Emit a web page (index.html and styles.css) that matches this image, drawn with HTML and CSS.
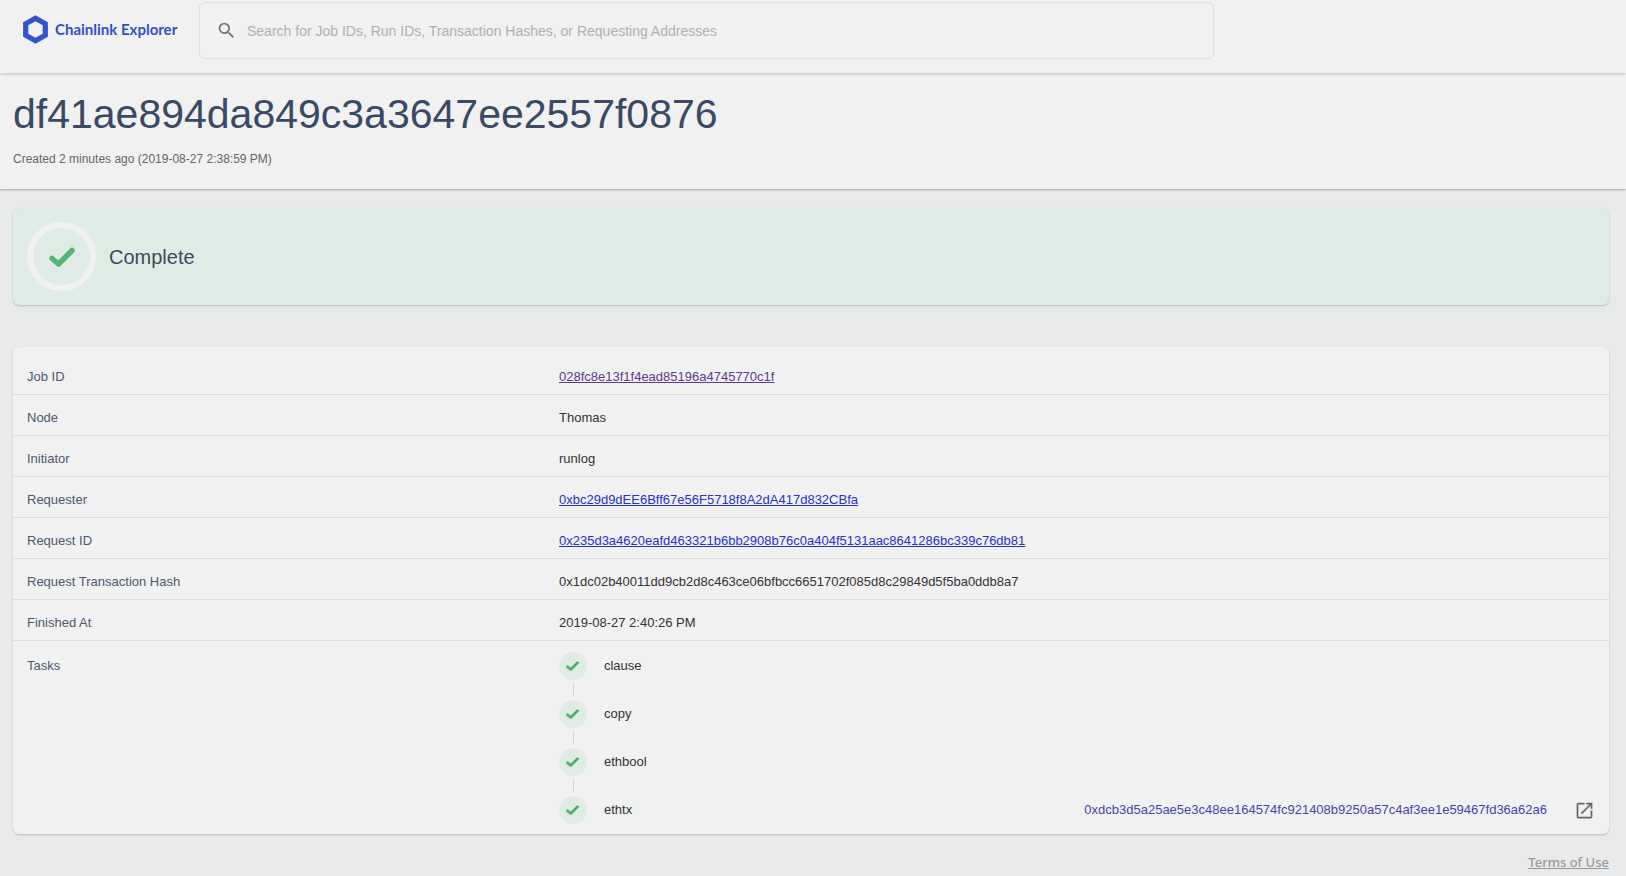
FILE: index.html
```html
<!DOCTYPE html>
<html lang="en">
<head>
<meta charset="utf-8">
<meta name="viewport" content="width=device-width, initial-scale=1">
<title>Chainlink Explorer</title>
<link rel="stylesheet" href="styles.css">
</head>
<body>
<svg class="sprite" aria-hidden="true">
  <symbol id="check" viewBox="0 0 26 20"><path d="M3 11.5 9.5 17 23 3.5" fill="none" stroke="currentColor" stroke-width="5.5" stroke-linecap="round" stroke-linejoin="round"/></symbol>
</svg>
<header class="topbar">
  <a class="brand" href="#">
    <svg class="brand-mark" viewBox="0 0 25 29" aria-hidden="true"><path d="M12.500 3.200 22.300 8.850V20.150L12.500 25.800 2.700 20.150V8.850Z" fill="none" stroke="#2f55cc" stroke-width="5.200"/></svg>
    <span>Chainlink Explorer</span>
  </a>
  <form class="search" role="search">
    <svg class="search-icon" viewBox="0 0 24 24" aria-hidden="true"><path fill="currentColor" d="M15.500 14h-.79l-.28-.27A6.471 6.471 0 0 0 16 9.500 6.500 6.500 0 1 0 9.500 16c1.610 0 3.090-.59 4.230-1.570l.27.28v.79l5 4.990L20.490 19l-4.990-5zm-6 0C7.010 14 5 11.990 5 9.500S7.010 5 9.500 5 14 7.010 14 9.500 11.990 14 9.500 14z"/></svg>
    <input class="search-input" type="search" aria-label="Search" placeholder="Search for Job IDs, Run IDs, Transaction Hashes, or Requesting Addresses">
  </form>
</header>
<section class="hero">
  <h1 class="hero-title">df41ae894da849c3a3647ee2557f0876</h1>
  <p class="hero-meta">Created 2 minutes ago (2019-08-27 2:38:59 PM)</p>
</section>
<main class="content">
  <section class="card status">
    <span class="status-ring"><svg class="status-check" aria-hidden="true"><use href="#check"/></svg></span>
    <h2 class="status-text">Complete</h2>
  </section>
  <section class="card details">
    <table class="table">
      <tbody>
        <tr><th scope="row">Job ID</th><td><a class="visited" href="#">028fc8e13f1f4ead85196a4745770c1f</a></td></tr>
        <tr><th scope="row">Node</th><td>Thomas</td></tr>
        <tr><th scope="row">Initiator</th><td>runlog</td></tr>
        <tr><th scope="row">Requester</th><td><a class="link" href="#">0xbc29d9dEE6Bff67e56F5718f8A2dA417d832CBfa</a></td></tr>
        <tr><th scope="row">Request ID</th><td><a class="link" href="#">0x235d3a4620eafd463321b6bb2908b76c0a404f5131aac8641286bc339c76db81</a></td></tr>
        <tr><th scope="row">Request Transaction Hash</th><td>0x1dc02b40011dd9cb2d8c463ce06bfbcc6651702f085d8c29849d5f5ba0ddb8a7</td></tr>
        <tr><th scope="row">Finished At</th><td>2019-08-27 2:40:26 PM</td></tr>
        <tr class="tasks-row"><th scope="row">Tasks</th><td>
          <ol class="tasks">
            <li class="task"><span class="dot"><svg class="dot-check" aria-hidden="true"><use href="#check"/></svg></span><span>clause</span></li>
            <li class="task"><span class="dot"><svg class="dot-check" aria-hidden="true"><use href="#check"/></svg></span><span>copy</span></li>
            <li class="task"><span class="dot"><svg class="dot-check" aria-hidden="true"><use href="#check"/></svg></span><span>ethbool</span></li>
            <li class="task"><span class="dot"><svg class="dot-check" aria-hidden="true"><use href="#check"/></svg></span><span>ethtx</span>
              <a class="tx" href="#"><span>0xdcb3d5a25ae5e3c48ee164574fc921408b9250a57c4af3ee1e59467fd36a62a6</span>
                <svg class="tx-icon" viewBox="0 0 24 24" aria-hidden="true"><path fill="currentColor" d="M19 19H5V5h7V3H5a2 2 0 0 0-2 2v14a2 2 0 0 0 2 2h14c1.100 0 2-.9 2-2v-7h-2v7zM14 3v2h3.590l-9.830 9.830 1.410 1.410L19 6.410V10h2V3h-7z"/></svg></a></li>
          </ol>
        </td></tr>
      </tbody>
    </table>
  </section>
</main>
<footer class="footer"><a href="#">Terms of Use</a></footer>
</body>
</html>
```
FILE: styles.css
```css
* { box-sizing: border-box; }

body {
  margin: 0;
  background: #e8e9eb;
  color: #333;
  font: 13px/16px "Liberation Sans", Arial, sans-serif;
}

.sprite { position: absolute; width: 0; height: 0; }

.topbar {
  position: relative;
  z-index: 1;
  display: flex;
  align-items: flex-start;
  gap: 22px;
  padding: 2px 23px 14px;
  background: #f1f1f1;
  box-shadow: 0 1px 3px rgba(0, 0, 0, .22);
}

.brand {
  display: flex;
  align-items: center;
  gap: 7px;
  width: 154px;
  height: 54px;
  flex: none;
  color: #3150c4;
  font: 700 15px/20px Lato, sans-serif;
  text-decoration: none;
  white-space: nowrap;
}
.brand-mark { width: 25px; height: 29px; flex: none; }

.search {
  display: flex;
  align-items: center;
  flex: 1;
  gap: 10px;
  max-width: 1015px;
  height: 57px;
  padding: 0 16px;
  border: 1px solid #dedede;
  border-radius: 6px;
}
.search-icon { width: 21px; height: 21px; flex: none; color: #757575; }
.search-input {
  flex: 1;
  min-width: 0;
  padding: 0;
  border: 0;
  outline: 0;
  background: none;
  color: #333;
  font: 14px/20px "Liberation Sans", Arial, sans-serif;
}
.search-input::placeholder { color: #aeb0b3; opacity: 1; }

.hero {
  padding: 17px 13px 22px;
  background: #f1f1f1;
  box-shadow: 0 1px 2px rgba(0, 0, 0, .28);
}
.hero-title {
  margin: 0;
  color: #3a4a66;
  font-size: 41px;
  font-weight: 400;
  line-height: 48px;
  overflow-wrap: anywhere;
}
.hero-meta { margin: 13px 0 0; color: #666; font-size: 12px; line-height: 16px; }

.content { padding: 19px 17px 0 13px; }

.card {
  border-radius: 6px;
  background: #f1f1f1;
  box-shadow: 0 1px 2px rgba(0, 0, 0, .2);
}

.status {
  display: flex;
  align-items: center;
  gap: 13px;
  padding: 14px;
  background: #dfece5;
}
.status-ring {
  display: grid;
  place-items: center;
  width: 69px;
  height: 69px;
  border: 6px solid #f1f1f1;
  border-radius: 50%;
  color: #57b573;
}
.status-check { width: 26px; height: 20px; }
.status-text { margin: 0; color: #3a4a5c; font-size: 20px; font-weight: 400; line-height: 24px; }

.details { margin-top: 42px; padding: 7px 0 10px; }

.table { width: 100%; border-collapse: separate; border-spacing: 0; table-layout: fixed; }
.table th,
.table td {
  padding: 15px 14px 9px;
  border-bottom: 1px solid #dbdcde;
  text-align: left;
  vertical-align: top;
  overflow-wrap: anywhere;
}
.table th { width: 33.333%; color: #4d5870; font-weight: 400; }
.link { color: #2a2fd0; }
.visited { color: #5c3a8e; }
.table .tasks-row th { padding-top: 17px; border: 0; }
.table .tasks-row td { padding: 11px 14px 0; border: 0; }

.tasks { display: grid; gap: 20px; margin: 0; padding: 0; list-style: none; }
.task { position: relative; display: flex; align-items: center; gap: 17px; min-height: 28px; }
.task:not(:last-child)::after {
  content: "";
  position: absolute;
  left: 14px;
  top: calc(100% + 3px);
  height: 14px;
  border-left: 1px solid #d2d3d4;
}
.dot {
  display: grid;
  place-items: center;
  flex: none;
  width: 28px;
  height: 28px;
  border-radius: 50%;
  background: #dfece5;
  color: #4fb06d;
}
.dot-check { width: 13px; height: 10px; }

.tx {
  display: flex;
  align-items: center;
  gap: 27px;
  margin-left: auto;
  color: #4444ae;
  text-decoration: none;
}
.tx-icon { width: 21px; height: 21px; flex: none; color: #666; }

.footer { padding: 19px 17px 3px; text-align: right; }
.footer a { color: #999; font: 500 13px/18px "Noto Sans", sans-serif; }
```
